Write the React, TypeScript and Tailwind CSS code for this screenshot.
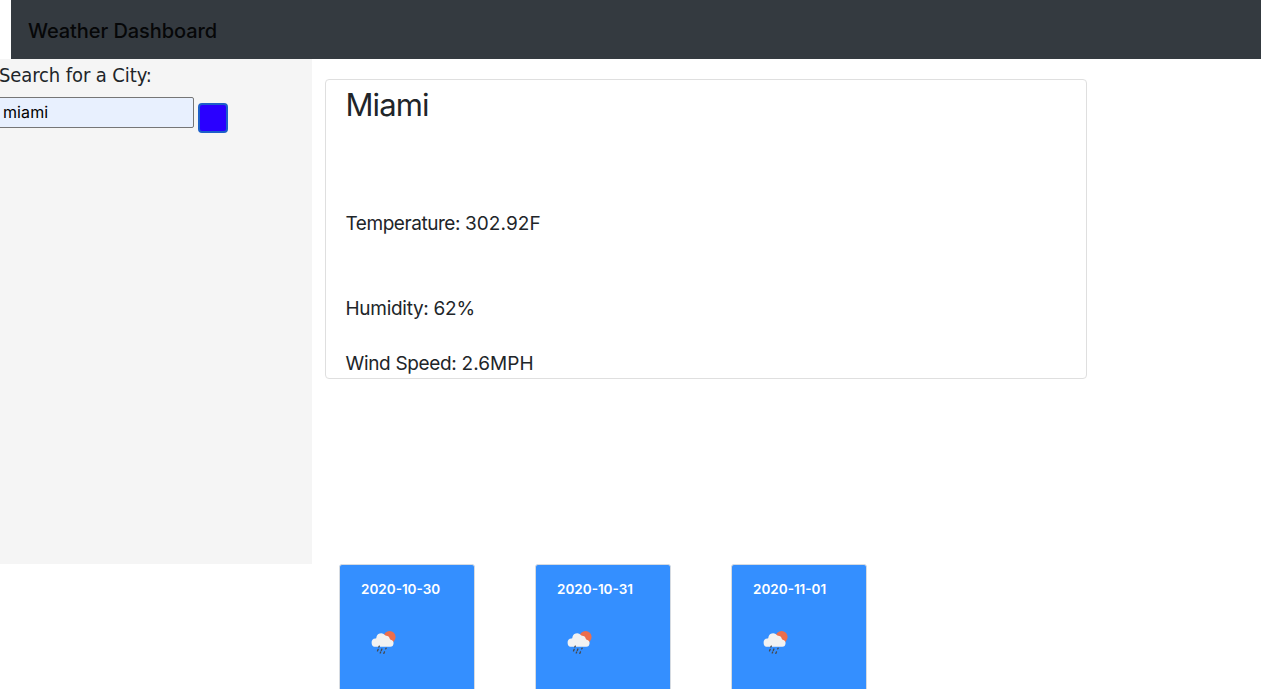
const forecast = ["2020-10-30", "2020-10-31", "2020-11-01"];

function RainIcon() {
  return (
    <svg width="26" height="24" viewBox="0 0 26 24" className="block">
      <circle cx="18.6" cy="6.1" r="6" fill="#ec6e4c" />
      <path
        d="M4.9 15.8a4.1 4.1 0 0 1-.4-8.2c.6 0 .9-.4.9-1A4.7 4.7 0 0 1 13.8 4c.4.5.8.6 1.3.7a4 4 0 0 1 3.7 3.1c.1.5.4.8.9.9a3.6 3.6 0 0 1-.4 7.1z"
        fill="#f2f2f2"
      />
      <path
        d="M8.3 15.1l-.5.9M7.2 18.3l-.7 1.6M10.9 18l-.6 1.5M15.2 17.2l-.5.7M9.7 21l-.5 1M13.5 20.8l-.7 1.6"
        stroke="#48484a"
        strokeWidth="1.3"
        strokeLinecap="round"
      />
    </svg>
  );
}

export default function App() {
  return (
    <div className="h-[689px] w-[1276px] overflow-hidden bg-white font-['Inter',sans-serif] text-[#212529]">
      <header className="ml-[11px] flex h-[59px] w-[1250px] items-center bg-[#343a40] pt-[3px] pl-[17px]">
        <h1 className="text-[20px] leading-[30px] font-medium tracking-[-0.08px] whitespace-nowrap text-[#060708]">
          Weather Dashboard
        </h1>
      </header>
      <div className="flex h-[630px]">
        <aside className="h-[505px] w-[312px] shrink-0 bg-[#f5f5f5]">
          <label
            htmlFor="city"
            className="-ml-[1px] block h-[38px] pt-[1px] font-['DejaVu_Sans_Condensed','DejaVu_Sans',sans-serif] text-[20px] leading-[30px] font-stretch-condensed tracking-[-0.1px] whitespace-nowrap"
          >
            Search for a City:
          </label>
          <div className="flex">
            <input
              id="city"
              defaultValue="miami"
              className="-ml-[2px] h-[31px] w-[196px] rounded-[2px] border border-[#767676] bg-[#e8f0fe] pb-[2px] pl-[4px] text-[16px] tracking-[0.1px] text-black outline-none"
            />
            <button
              aria-label="Search"
              className="mt-[6px] ml-[4px] h-[30px] w-[30px] rounded-[4px] border-2 border-[#1d5fc9] bg-[#2a00ff]"
            />
          </div>
        </aside>
        <main className="pt-[20px] pl-[13px]">
          <section className="h-[300px] w-[762px] rounded-[4px] border border-[#dfdfdf] pl-[19.5px] whitespace-nowrap">
            <h2 className="pt-[6px] text-[31px] leading-[38px] tracking-[-0.9px]">Miami</h2>
            <p className="mt-[85px] text-[19px] leading-[30px]">
              <span className="tracking-[-0.45px]">Temperature: </span>
              <span className="tracking-[0.1px]">302.92F</span>
            </p>
            <p className="mt-[55px] text-[19px] leading-[30px] tracking-[-0.28px]">Humidity: 62%</p>
            <p className="mt-[25px] text-[19px] leading-[30px]">
              <span className="tracking-[-0.33px]">Wind Speed: </span>
              <span className="tracking-[0.05px]">2.6MPH</span>
            </p>
          </section>
          <div className="mt-[185px] ml-[14px] flex gap-[60px]">
            {forecast.map((date) => (
              <article
                key={date}
                className="h-[150px] w-[136px] rounded-[3px] border border-[#d6dbe1] bg-[#348fff] pt-[14px] pl-[21px]"
              >
                <h3 className="text-[13.5px] leading-[20px] font-semibold whitespace-nowrap text-white">
                  {date}
                </h3>
                <div className="mt-[32px] ml-[10px]">
                  <RainIcon />
                </div>
              </article>
            ))}
          </div>
        </main>
      </div>
    </div>
  );
}
